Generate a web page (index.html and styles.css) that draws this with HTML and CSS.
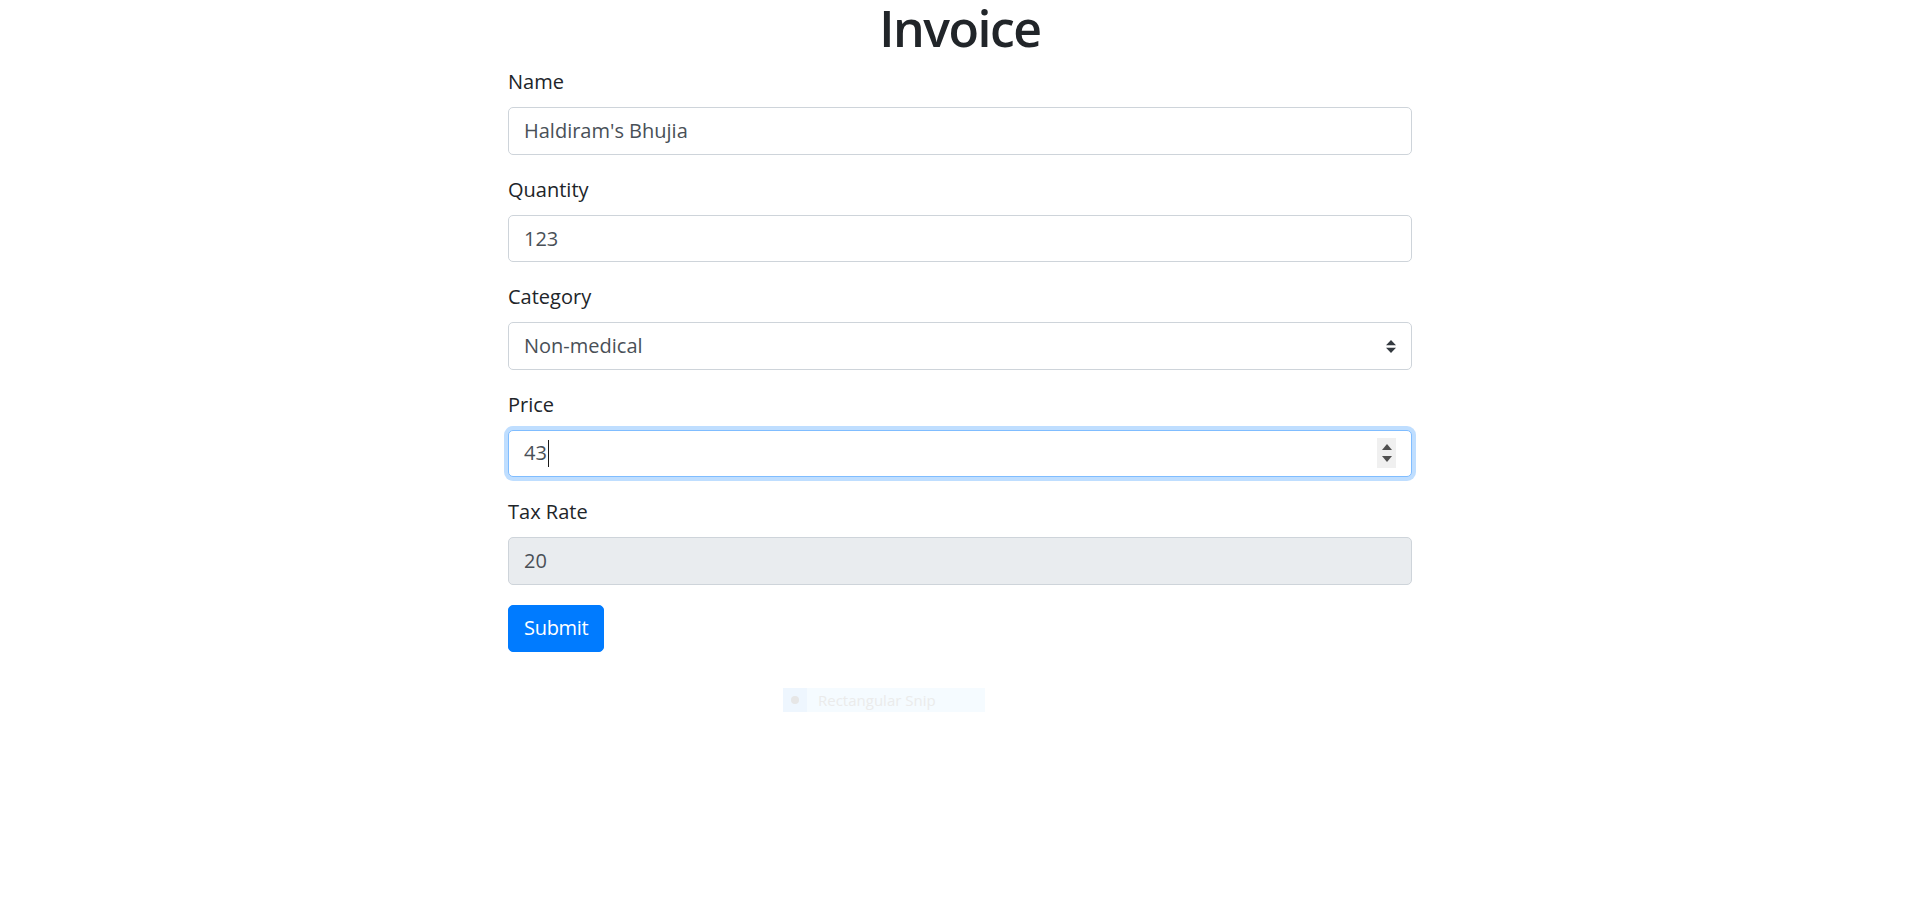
FILE: index.html
```html
<!DOCTYPE html>
<html lang="en">
<head>
<meta charset="utf-8">
<title>Invoice</title>
<link rel="stylesheet" href="styles.css">
</head>
<body>
<div class="page">
  <main class="container">
    <h1 class="title">Invoice</h1>
    <form class="invoice-form">
      <div class="form-group">
        <label class="form-label" for="name">Name</label>
        <input class="form-control" id="name" type="text" value="Haldiram's Bhujia">
      </div>
      <div class="form-group">
        <label class="form-label" for="qty">Quantity</label>
        <input class="form-control" id="qty" type="text" value="123">
      </div>
      <div class="form-group">
        <label class="form-label" for="cat">Category</label>
        <select class="form-control custom-select" id="cat">
          <option>Non-medical</option>
          <option>Medical</option>
        </select>
      </div>
      <div class="form-group">
        <label class="form-label">Price</label>
        <div class="form-control fake-input is-focused">
          <span class="fake-value">43</span><span class="caret"></span>
          <span class="spinner">
            <svg class="spin-arrow" width="10" height="6" viewBox="0 0 10 6"><path d="M0 6 L5 0 L10 6 Z" fill="#505050"/></svg>
            <svg class="spin-arrow" width="10" height="6" viewBox="0 0 10 6"><path d="M0 0 L10 0 L5 6 Z" fill="#505050"/></svg>
          </span>
        </div>
      </div>
      <div class="form-group">
        <label class="form-label" for="tax">Tax Rate</label>
        <input class="form-control" id="tax" type="text" value="20" disabled>
      </div>
      <button class="btn-primary" type="button">Submit</button>
    </form>
  </main>
  <div class="snip-ghost">
    <span class="snip-icon"><span class="snip-dot"></span></span>
    <span class="snip-text">Rectangular Snip</span>
  </div>
</div>
</body>
</html>
```

FILE: styles.css
```css
* { box-sizing: border-box; }

html, body {
  margin: 0;
  padding: 0;
  background: #fff;
}

body {
  font-family: "Open Sans", "Noto Sans", "DejaVu Sans", sans-serif;
  font-size: 20px;
  line-height: 1.5;
  color: #212529;
}

.page {
  position: relative;
  min-height: 897px;
}

.container {
  width: 904px;
  margin-left: 508px;
}

.title {
  margin: 0 0 10px 0;
  font-size: 50px;
  font-weight: 600;
  line-height: 57px;
  letter-spacing: -1.5px;
  text-align: center;
  color: #212529;
}

.form-group {
  margin-bottom: 20px;
}

.form-label {
  display: block;
  margin-bottom: 10px;
  line-height: 30px;
  color: #212529;
}

.form-control {
  display: block;
  width: 100%;
  height: 47.5px;
  padding: 7.5px 15px;
  font-family: inherit;
  font-size: 20px;
  line-height: 30px;
  color: #495057;
  background: #fff;
  border: 1px solid #ced4da;
  border-radius: 5px;
  outline: none;
  margin: 0;
}

.form-control:disabled {
  background: #e9ecef;
  color: #495057;
  opacity: 1;
}

.custom-select {
  -webkit-appearance: none;
  appearance: none;
  padding-right: 40px;
  background: #fff url("data:image/svg+xml,%3csvg xmlns='http://www.w3.org/2000/svg' width='4' height='5' viewBox='0 0 4 5'%3e%3cpath fill='%23343a40' d='M2 0L0 2h4zm0 5L0 3h4z'/%3e%3c/svg%3e") no-repeat right 15px center / 10px 12.5px;
}

.fake-input {
  display: flex;
  align-items: center;
}

.is-focused {
  border-color: #80bdff;
  box-shadow: 0 0 0 4px rgba(0, 123, 255, 0.25);
}

.fake-value {
  color: #495057;
}

.caret {
  display: inline-block;
  width: 1px;
  height: 27px;
  margin-left: 1px;
  background: #1a1a1a;
}

.spinner {
  margin-left: auto;
  width: 19px;
  height: 30px;
  background: #f0f0f0;
  display: flex;
  flex-direction: column;
  align-items: center;
  justify-content: center;
  gap: 6px;
}

.spin-arrow {
  display: block;
}

.btn-primary {
  display: inline-block;
  height: 47.5px;
  padding: 7.5px 15px;
  font-family: inherit;
  font-size: 20px;
  line-height: 30px;
  letter-spacing: -0.3px;
  color: #fff;
  background: #007bff;
  border: 1px solid #007bff;
  border-radius: 5px;
  cursor: pointer;
}

.snip-ghost {
  position: absolute;
  left: 783px;
  top: 688px;
  width: 202px;
  height: 24px;
  display: flex;
  align-items: center;
  background: #f5fbff;
  font-family: "Open Sans", "Noto Sans", sans-serif;
  font-size: 15px;
  line-height: 24px;
  color: #ebebeb;
}

.snip-icon {
  width: 24px;
  height: 24px;
  background: #eef6fe;
  display: flex;
  align-items: center;
  justify-content: center;
}

.snip-dot {
  width: 8px;
  height: 8px;
  border-radius: 50%;
  background: #e6e6e6;
}

.snip-text {
  margin-left: 11px;
}
```
